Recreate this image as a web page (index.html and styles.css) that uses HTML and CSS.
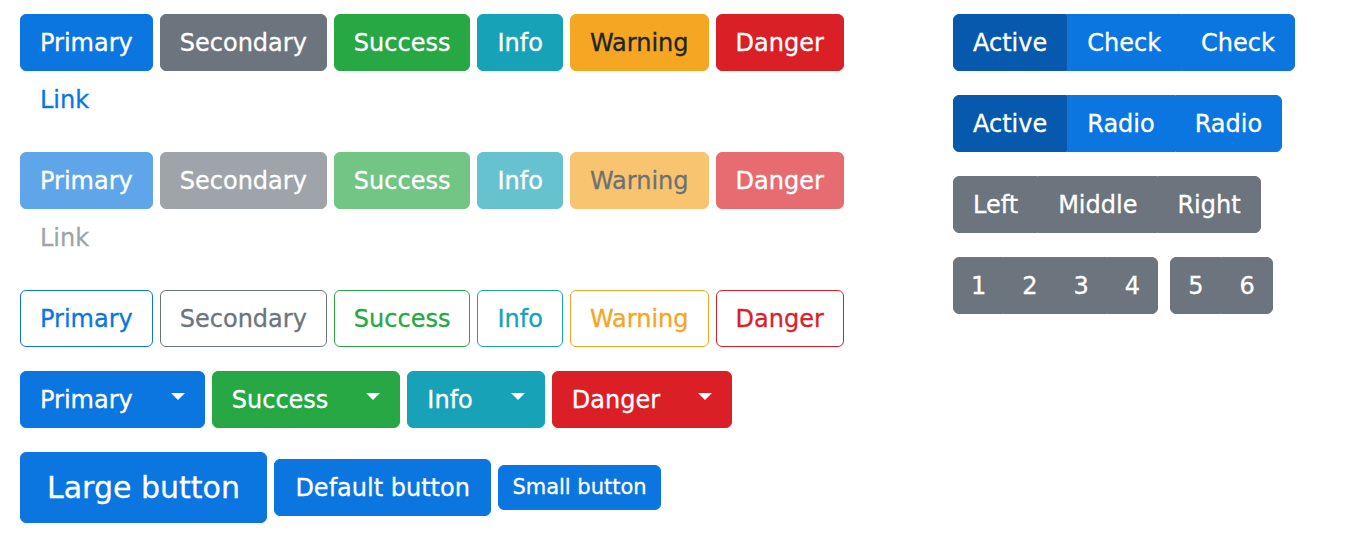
FILE: index.html
```html
<!DOCTYPE html>
<html lang="en">
<head>
<meta charset="utf-8">
<title>Buttons</title>
<link rel="stylesheet" href="styles.css">
</head>
<body>
<div class="page">
  <div class="main">
    <div class="row">
      <button class="btn primary">Primary</button>
      <button class="btn secondary">Secondary</button>
      <button class="btn success">Success</button>
      <button class="btn info">Info</button>
      <button class="btn warning">Warning</button>
      <button class="btn danger">Danger</button>
      <button class="btn link">Link</button>
    </div>
    <div class="row disabled">
      <button class="btn primary">Primary</button>
      <button class="btn secondary">Secondary</button>
      <button class="btn success">Success</button>
      <button class="btn info">Info</button>
      <button class="btn warning">Warning</button>
      <button class="btn danger">Danger</button>
      <button class="btn link">Link</button>
    </div>
    <div class="row">
      <button class="btn o-primary">Primary</button>
      <button class="btn o-secondary">Secondary</button>
      <button class="btn o-success">Success</button>
      <button class="btn o-info">Info</button>
      <button class="btn o-warning">Warning</button>
      <button class="btn o-danger">Danger</button>
    </div>
    <div class="row">
      <button class="btn primary dd">Primary<span class="caret"></span></button>
      <button class="btn success dd">Success<span class="caret"></span></button>
      <button class="btn info dd">Info<span class="caret"></span></button>
      <button class="btn danger dd">Danger<span class="caret"></span></button>
    </div>
    <div class="row sizes">
      <button class="btn primary lg">Large button</button>
      <button class="btn primary md">Default button</button>
      <button class="btn primary sm">Small button</button>
    </div>
  </div>
  <div class="side">
    <div class="bgroup">
      <button class="btn primary active">Active</button>
      <button class="btn primary">Check</button>
      <button class="btn primary">Check</button>
    </div>
    <div class="bgroup">
      <button class="btn primary active">Active</button>
      <button class="btn primary">Radio</button>
      <button class="btn primary">Radio</button>
    </div>
    <div class="bgroup">
      <button class="btn secondary">Left</button>
      <button class="btn secondary">Middle</button>
      <button class="btn secondary">Right</button>
    </div>
    <div class="toolbar">
      <div class="bgroup">
        <button class="btn secondary num">1</button>
        <button class="btn secondary num">2</button>
        <button class="btn secondary num">3</button>
        <button class="btn secondary num">4</button>
      </div>
      <div class="bgroup">
        <button class="btn secondary num">5</button>
        <button class="btn secondary num">6</button>
      </div>
    </div>
  </div>
</div>
</body>
</html>
```

FILE: styles.css
```css
html, body {
  margin: 0;
  padding: 0;
  background: #fff;
}

body {
  font-family: "DejaVu Sans", "Liberation Sans", sans-serif;
  color: #212529;
}

.page {
  display: grid;
  grid-template-columns: 900px auto;
  column-gap: 33px;
  padding: 14px 20px;
  align-items: start;
}

.main, .side {
  display: flex;
  flex-direction: column;
  align-items: flex-start;
  gap: 24px;
}

.row {
  display: flex;
  flex-wrap: wrap;
  column-gap: 7px;
  row-gap: 0;
}

.sizes {
  align-items: center;
}

.btn {
  font-family: inherit;
  font-size: 24px;
  line-height: 36px;
  padding: 9.5px 19px;
  border: 1px solid transparent;
  border-radius: 6px;
  background: transparent;
  color: #fff;
  cursor: pointer;
  -webkit-text-stroke: 0.3px currentColor;
  white-space: nowrap;
}

.primary { background: #0b76e0; border-color: #0b76e0; }
.secondary { background: #6c757d; border-color: #6c757d; }
.success { background: #28a745; border-color: #28a745; }
.info { background: #17a2b8; border-color: #17a2b8; }
.warning { background: #f5a623; border-color: #f5a623; color: #212529; }
.danger { background: #db1f27; border-color: #db1f27; }
.link { color: #0b76e0; background: transparent; border-color: transparent; }

.active { background: #0659ad; border-color: #0659ad; }

.disabled .btn { opacity: 0.65; }
.disabled .link { color: #6c757d; }

.o-primary { color: #0b76e0; border-color: #0b76e0; }
.o-secondary { color: #6c757d; border-color: #6c757d; }
.o-success { color: #28a745; border-color: #28a745; }
.o-info { color: #17a2b8; border-color: #17a2b8; }
.o-warning { color: #f5a623; border-color: #f5a623; }
.o-danger { color: #db1f27; border-color: #db1f27; }

.dd {
  display: inline-flex;
  align-items: center;
}

.caret {
  display: inline-block;
  width: 0;
  height: 0;
  margin-left: 38px;
  margin-bottom: 6px;
  border-top: 7px solid currentColor;
  border-left: 7px solid transparent;
  border-right: 7px solid transparent;
}

.lg {
  font-size: 30px;
  line-height: 45px;
  padding: 12px 26px;
}

.md {
  padding-left: 20.5px;
  padding-right: 20.5px;
}

.sm {
  font-size: 21px;
  line-height: 31px;
  padding: 6px 13px;
}

.bgroup {
  display: inline-flex;
}

.bgroup .btn {
  border-radius: 0;
}

.bgroup .btn:first-child {
  border-top-left-radius: 6px;
  border-bottom-left-radius: 6px;
}

.bgroup .btn:last-child {
  border-top-right-radius: 6px;
  border-bottom-right-radius: 6px;
}

.bgroup .num {
  padding-left: 17px;
  padding-right: 17px;
}

.toolbar {
  display: flex;
  gap: 12px;
}
```
